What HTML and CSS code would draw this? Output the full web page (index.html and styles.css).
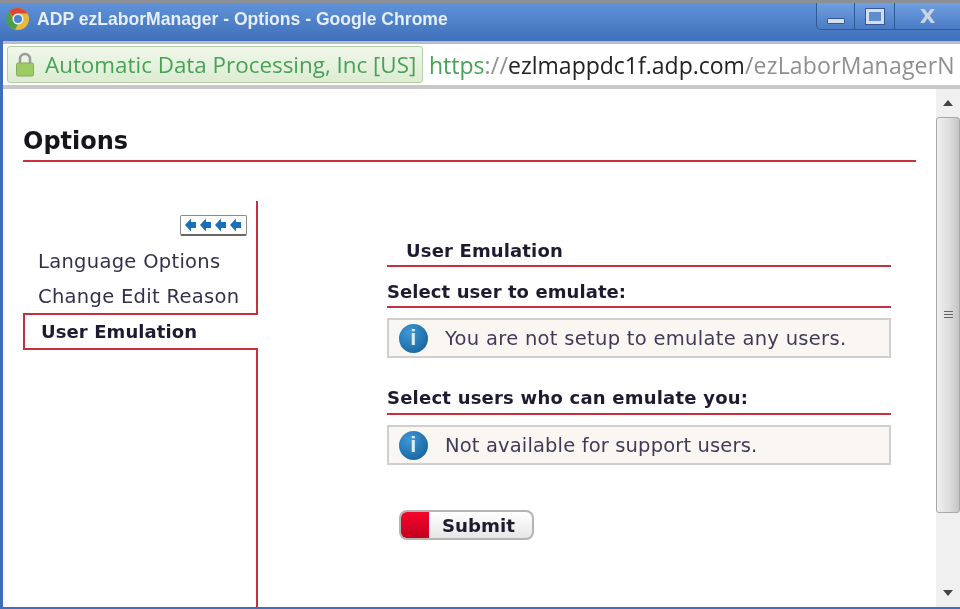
FILE: index.html
```html
<!DOCTYPE html>
<html lang="en">
<head>
    <meta charset="UTF-8">
    <meta name="viewport" content="width=device-width, initial-scale=1.0">
    <title>ADP ezLaborManager - Options - Google Chrome</title>
    <link rel="stylesheet" href="styles.css">
</head>
<body>
    <div class="window">
        <!-- Title bar -->
        <div class="titlebar">
            <svg class="chrome-logo" width="24" height="24" viewBox="0 0 24 24">
                <circle cx="12" cy="12" r="11" fill="#e8b93a"/>
                <path d="M12 1a11 11 0 0 1 9.500 5.500H12a5.500 5.500 0 0 0-5.200 3.400L3 4.600A11 11 0 0 1 12 1z" fill="#d8483a"/>
                <path d="M3 4.600l4.900 8.900a5 5 0 0 0 4 4L9.200 22.600A11 11 0 0 1 3 4.600z" fill="#4e9e4c"/>
                <circle cx="12" cy="12" r="5.500" fill="#f0f0f0"/>
                <circle cx="12" cy="12" r="4" fill="#4a84d0"/>
            </svg>
            <span class="title-text">ADP ezLaborManager - Options - Google Chrome</span>
            <div class="win-buttons">
                <div class="win-btn btn-min"><span class="min-glyph"></span></div>
                <div class="win-btn btn-max"><span class="max-glyph"></span></div>
                <div class="win-btn btn-close">X</div>
            </div>
        </div>

        <!-- Address bar -->
        <div class="addressbar">
            <div class="ev-badge">
                <svg width="20" height="26" viewBox="0 0 20 26">
                    <path d="M5 11V7a5 5 0 0 1 10 0v4" fill="none" stroke="#9a9a9a" stroke-width="2.500"/>
                    <rect x="1.500" y="11" width="17" height="13" rx="1.500" fill="#9ccc62" stroke="#86a868"/>
                </svg>
                <span>Automatic Data Processing, Inc [US]</span>
            </div>
            <div class="url"><span class="url-scheme">https</span><span class="url-dim">://</span><span class="url-host">ezlmappdc1f.adp.com</span><span class="url-dim">/ezLaborManagerN</span></div>
        </div>

        <!-- Page -->
        <div class="viewport">
            <div class="page">
                <h1 class="page-title">Options</h1>
                <div class="columns">
                    <div class="sidebar">
                        <div class="side-top">
                            <div class="collapse-row">
                                <div class="collapse-btn">
                                    <svg width="60" height="14" viewBox="0 0 60 14">
                                        <path d="M1 7l6-6.500V4h5v6H7v3.500z" fill="#1a6fb8"/>
                                        <path d="M16 7l6-6.500V4h5v6h-5v3.500z" fill="#1a6fb8"/>
                                        <path d="M31 7l6-6.500V4h5v6h-5v3.500z" fill="#1a6fb8"/>
                                        <path d="M46 7l6-6.500V4h5v6h-5v3.500z" fill="#1a6fb8"/>
                                    </svg>
                                </div>
                            </div>
                            <div class="side-link">Language Options</div>
                            <div class="side-link">Change Edit Reason</div>
                        </div>
                        <div class="side-tab">User Emulation</div>
                        <div class="side-rest"></div>
                    </div>
                    <div class="main">
                        <h2 class="main-title">User Emulation</h2>
                        <h3 class="section-title">Select user to emulate:</h3>
                        <div class="notice">
                            <span class="info-icon">i</span>
                            <span>You are not setup to emulate any users.</span>
                        </div>
                        <h3 class="section-title section-second">Select users who can emulate you:</h3>
                        <div class="notice notice-short">
                            <span class="info-icon">i</span>
                            <span>Not available for support users.</span>
                        </div>
                        <div class="submit-btn">
                            <span class="submit-red"></span>
                            <span class="submit-label">Submit</span>
                        </div>
                    </div>
                </div>
            </div>

            <!-- Scrollbar -->
            <div class="scrollbar">
                <div class="scroll-arrow"><span class="tri-up"></span></div>
                <div class="scroll-thumb"><span class="grip"></span></div>
                <div class="scroll-track"></div>
                <div class="scroll-arrow"><span class="tri-down"></span></div>
            </div>
        </div>
        <div class="bottom-edge"></div>
    </div>
</body>
</html>
```

FILE: styles.css
```css
* {
    margin: 0;
    padding: 0;
    box-sizing: border-box;
}

html, body {
    width: 960px;
    height: 609px;
    overflow: hidden;
    background-color: white;
    font-family: "DejaVu Sans", sans-serif;
}

/* slight softness, the source is an upscaled capture */
.window {
    display: flex;
    flex-direction: column;
    height: 609px;
    filter: blur(0.5px);
}

/* Title bar */
.titlebar {
    display: flex;
    align-items: center;
    height: 41px;
    padding-left: 6px;
    padding-bottom: 6px;
    border-top: 3px solid #8c8f96;
    background: linear-gradient(#5f93d9, #3f6fb8);
    position: relative;
}

.title-text {
    margin-left: 7px;
    font-family: "Liberation Sans", sans-serif;
    font-size: 19px;
    font-weight: bold;
    color: #e6eefa;
    transform: scaleX(0.925);
    transform-origin: left center;
    white-space: nowrap;
}

.win-buttons {
    display: flex;
    position: absolute;
    top: 0;
    right: 0;
    height: 27px;
    border: 1px solid #2f5a98;
    border-top: none;
    border-right: none;
    border-bottom-left-radius: 5px;
}

.win-btn {
    display: flex;
    justify-content: center;
    align-items: center;
    background: linear-gradient(#6f9fe0, #4a7cc4);
    border-right: 1px solid #2f5a98;
    color: #c9d5e6;
}

.btn-min {
    width: 38px;
    border-bottom-left-radius: 5px;
}

.btn-max {
    width: 40px;
}

.btn-close {
    width: 65px;
    border-right: none;
    font-size: 20px;
    font-weight: bold;
}

.min-glyph {
    width: 18px;
    height: 6px;
    margin-top: 9px;
    background: #d5deea;
    border: 1px solid #33598f;
    border-radius: 1px;
}

.max-glyph {
    width: 18px;
    height: 15px;
    border: 3px solid #d5deea;
    outline: 1px solid #33598f;
    background: #5d8dd0;
}

/* Address bar */
.addressbar {
    display: flex;
    align-items: center;
    height: 48px;
    margin-left: 3px;
    padding-left: 4px;
    border-top: 3px solid #b9bec6;
    border-bottom: 4px solid #c8c8c8;
    background: white;
    overflow: hidden;
    box-shadow: -3px 0 0 #3f6fb8;
}

.ev-badge {
    display: flex;
    align-items: center;
    flex-shrink: 0;
    gap: 10px;
    width: 416px;
    height: 37px;
    padding-left: 7px;
    border: 1px solid #b5cfa8;
    border-radius: 3px;
    background: linear-gradient(#f0f7ea, #dcecd2);
    font-size: 22.4px;
    font-family: "Open Sans", sans-serif;
    color: #47a257;
    white-space: nowrap;
}

.url {
    margin-left: 6px;
    font-family: "Open Sans", sans-serif;
    font-size: 23px;
    white-space: nowrap;
}

.url-scheme {
    color: #47a257;
}

.url-dim {
    color: #8f8f8f;
    letter-spacing: 0.2px;
}

.url-host {
    color: #222;
}

/* Page */
.viewport {
    display: flex;
    flex: 1;
    min-height: 0;
    border-left: 3px solid #3f6fb8;
}

.page {
    flex: 1;
    padding: 35px 20px 0 20px;
    display: flex;
    flex-direction: column;
}

.page-title {
    height: 38px;
    border-bottom: 2px solid #c8303f;
    font-size: 24px;
    line-height: 34px;
    color: #15151c;
}

.columns {
    display: flex;
    flex: 1;
    padding-top: 39px;
    color: #33304a;
}

.sidebar {
    display: flex;
    flex-direction: column;
    width: 235px;
    flex-shrink: 0;
}

.side-top {
    height: 113px;
    padding-top: 14px;
    border-right: 2px solid #c8303f;
}

.collapse-row {
    display: flex;
    justify-content: flex-end;
    padding-right: 9px;
    margin-bottom: 8px;
}

.collapse-btn {
    display: flex;
    align-items: center;
    justify-content: center;
    width: 67px;
    height: 21px;
    border: 1px solid #8a8a8a;
    border-bottom: 2px solid #666;
    border-radius: 2px;
    background: white;
}

.side-link {
    height: 35px;
    padding-left: 15px;
    font-size: 19.5px;
    line-height: 35px;
    letter-spacing: 0.3px;
    white-space: nowrap;
}

.side-tab {
    height: 37px;
    margin-top: -1px;
    padding-left: 16px;
    border: 2px solid #c8303f;
    border-right: none;
    font-size: 18px;
    font-weight: bold;
    line-height: 34px;
    letter-spacing: 0.1px;
    color: #1e1b30;
}

.side-rest {
    flex: 1;
    margin-top: -2px;
    border-top: 2px solid #c8303f;
    border-right: 2px solid #c8303f;
}

.main {
    width: 504px;
    margin-left: 129px;
    padding-top: 36px;
}

.main-title {
    height: 30px;
    padding-left: 19px;
    border-bottom: 2px solid #c8303f;
    font-size: 18px;
    line-height: 27px;
    letter-spacing: 0.15px;
    color: #1e1b30;
}

.section-title {
    height: 41px;
    padding-top: 13px;
    border-bottom: 2px solid #c8303f;
    font-size: 18px;
    line-height: 24px;
    letter-spacing: 0.08px;
    color: #1e1b30;
    white-space: nowrap;
}

.section-second {
    margin-top: 19px;
    height: 38px;
    padding-top: 9px;
    letter-spacing: 0.22px;
}

.notice {
    display: flex;
    align-items: center;
    gap: 17px;
    height: 40px;
    margin-top: 10px;
    padding-left: 10px;
    border: 2px solid #cfcfcf;
    background: #faf7f2;
    font-size: 19.5px;
    letter-spacing: 0.3px;
    color: #3e3b58;
    white-space: nowrap;
}

.notice-short {
    letter-spacing: 0.15px;
}

.info-icon {
    display: flex;
    justify-content: center;
    align-items: center;
    width: 29px;
    height: 29px;
    border-radius: 50%;
    background: radial-gradient(circle at 35% 30%, #3f97d4, #0f5a94);
    font-family: "Liberation Sans", sans-serif;
    font-size: 22px;
    font-weight: bold;
    color: #dcecf6;
}

.submit-btn {
    display: flex;
    align-items: center;
    width: 135px;
    height: 30px;
    margin-top: 45px;
    margin-left: 12px;
    border: 2px solid #b4b4b4;
    border-radius: 8px;
    background: linear-gradient(#ffffff, #e6e6e6);
    overflow: hidden;
}

.submit-red {
    align-self: stretch;
    width: 28px;
    background: linear-gradient(#f5062c, #c4001f);
}

.submit-label {
    margin-left: 13px;
    font-size: 18.2px;
    font-weight: bold;
    color: #1e1b30;
}

/* Scrollbar */
.scrollbar {
    display: flex;
    flex-direction: column;
    flex-shrink: 0;
    width: 24px;
    background: #f0f0f0;
}

.scroll-arrow {
    display: flex;
    justify-content: center;
    align-items: center;
    height: 28px;
}

.tri-up {
    border: 5px solid transparent;
    border-top: none;
    border-bottom: 6px solid #444;
}

.tri-down {
    border: 5px solid transparent;
    border-bottom: none;
    border-top: 6px solid #444;
}

.scroll-thumb {
    display: flex;
    justify-content: center;
    align-items: center;
    height: 396px;
    border: 1px solid #a8a8a8;
    border-radius: 3px;
    background: linear-gradient(90deg, #f0f0f0, #dcdcdc 60%, #c4c4c4);
}

.grip {
    width: 9px;
    height: 9px;
    background: repeating-linear-gradient(#666 0 1px, transparent 1px 3px);
}

.scroll-track {
    flex: 1;
}

.bottom-edge {
    height: 2px;
    background: #3f6fb8;
}
```
